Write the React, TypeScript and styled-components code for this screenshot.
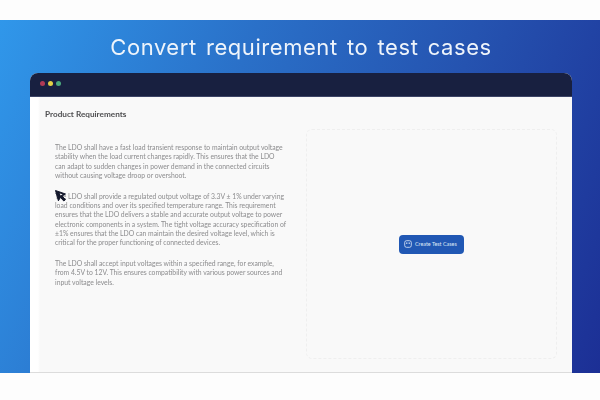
import React from "react";
import styled, { createGlobalStyle } from "styled-components";

const GlobalStyle = createGlobalStyle`
  html, body {
    margin: 0;
    padding: 0;
    background: #fdfdfd;
  }
  * {
    box-sizing: border-box;
  }
`;

const Page = styled.div`
  width: 600px;
  height: 400px;
  overflow: hidden;
  padding-top: 20px;
  background: #fdfdfd;
`;

const Hero = styled.section`
  height: 353px;
  display: flex;
  flex-direction: column;
  align-items: center;
  background: linear-gradient(112deg, #3097ea 0%, #2a70c8 35%, #2553b0 65%, #1c2f95 100%);
`;

const Title = styled.h1`
  margin: 0;
  height: 53px;
  padding-left: 2px;
  display: flex;
  align-items: center;
  font-family: "Inter", "Liberation Sans", sans-serif;
  font-size: 22px;
  font-weight: 400;
  letter-spacing: 0.55px;
  word-spacing: 2.6px;
  color: #eef4fb;
  filter: blur(0.3px);
`;

const Window = styled.div`
  align-self: flex-start;
  margin-left: 30px;
  width: 542px;
  flex: 1;
  display: flex;
  flex-direction: column;
  border-radius: 8px 8px 0 0;
  overflow: hidden;
  background: #fefefe;
  border-bottom: 1px solid #dcdcdc;
`;

const TitleBar = styled.div`
  height: 24px;
  display: flex;
  align-items: center;
  gap: 3px;
  padding: 0 0 2px 10px;
  background: #182040;
  border-bottom: 1px solid #3c4466;
`;

const Dot = styled.span<{ $color: string }>`
  width: 5px;
  height: 5px;
  border-radius: 50%;
  background: ${(p) => p.$color};
`;

const Body = styled.div`
  flex: 1;
  padding: 12px 14px 0 15px;
  background: linear-gradient(90deg, #ffffff 0, #ffffff 8px, #f9f9f9 10px);
`;

const Heading = styled.h2`
  margin: 0 0 9px;
  height: 11px;
  line-height: 11px;
  font-family: "Lato", "Liberation Sans", sans-serif;
  font-size: 8.2px;
  font-weight: 700;
  color: #4f4f51;
  filter: blur(0.25px);
`;

const Columns = styled.div`
  display: flex;
  align-items: flex-start;
`;

const TextColumn = styled.div`
  position: relative;
  width: 261px;
  padding: 14px 20px 0 10px;
  display: flex;
  flex-direction: column;
  gap: 11.5px;
`;

const Paragraph = styled.p`
  margin: 0;
  font-family: "Lato", "Liberation Sans", sans-serif;
  font-size: 6.8px;
  line-height: 9.3px;
  color: #8c8c8e;
  filter: blur(0.3px);
`;

const Pointer = styled.svg`
  position: absolute;
  left: 9px;
  top: 60px;
  width: 13px;
  height: 13px;
`;

const DropPanel = styled.div`
  width: 251px;
  height: 230px;
  display: flex;
  align-items: center;
  justify-content: center;
  border: 1px dashed #efefef;
  border-radius: 6px;
`;

const CreateButton = styled.button`
  width: 65px;
  height: 19px;
  padding: 0 0 0 5px;
  display: flex;
  align-items: center;
  gap: 3px;
  border: none;
  border-radius: 4px;
  background: #2158b4;
  font-family: "Lato", "Liberation Sans", sans-serif;
  font-size: 5.4px;
  color: #dfe8f6;
  white-space: nowrap;
`;

const BotIcon = styled.svg`
  width: 8px;
  height: 8px;
  flex: none;
`;

export default function App() {
  return (
    <>
      <GlobalStyle />
      <Page>
        <Hero>
          <Title>Convert requirement to test cases</Title>
          <Window>
            <TitleBar>
              <Dot $color="#b03a55" />
              <Dot $color="#e3d045" />
              <Dot $color="#4aa87c" />
            </TitleBar>
            <Body>
              <Heading>Product Requirements</Heading>
              <Columns>
                <TextColumn>
                  <Paragraph>
                    The LDO shall have a fast load transient response to maintain output voltage
                    stability when the load current changes rapidly. This ensures that the LDO
                    can adapt to sudden changes in power demand in the connected circuits
                    without causing voltage droop or overshoot.
                  </Paragraph>
                  <Paragraph>
                    The LDO shall provide a regulated output voltage of 3.3V ± 1% under varying
                    load conditions and over its specified temperature range. This requirement
                    ensures that the LDO delivers a stable and accurate output voltage to power
                    electronic components in a system. The tight voltage accuracy specification
                    of ±1% ensures that the LDO can maintain the desired voltage level, which is
                    critical for the proper functioning of connected devices.
                  </Paragraph>
                  <Paragraph>
                    The LDO shall accept input voltages within a specified range, for example,
                    from 4.5V to 12V. This ensures compatibility with various power sources and
                    input voltage levels.
                  </Paragraph>
                  <Pointer viewBox="0 0 13 13">
                    <path
                      d="M1.5 1.5 L11.5 5 L8 7 L11.5 10.6 L9.8 12 L6.4 8.4 L4.4 11.8 Z"
                      fill="#14182c"
                      stroke="#14182c"
                      strokeWidth="1"
                      strokeLinejoin="round"
                    />
                    <path d="M5.6 4.6 L8.6 5.3 L6.6 6.6 Z" fill="#fff" />
                  </Pointer>
                </TextColumn>
                <DropPanel>
                  <CreateButton>
                    <BotIcon viewBox="0 0 8 8">
                      <rect x="0.7" y="0.7" width="6.6" height="6.6" rx="1.8" fill="none" stroke="#e3ebf8" strokeWidth="0.8" />
                      <rect x="2.3" y="2.4" width="1" height="1.6" fill="#e3ebf8" />
                      <rect x="4.7" y="2.4" width="1" height="1.6" fill="#e3ebf8" />
                    </BotIcon>
                    Create Test Cases
                  </CreateButton>
                </DropPanel>
              </Columns>
            </Body>
          </Window>
        </Hero>
      </Page>
    </>
  );
}
